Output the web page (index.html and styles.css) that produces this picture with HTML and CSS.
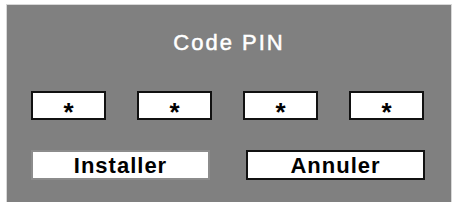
FILE: index.html
```
<!DOCTYPE html>
<html lang="fr">
<head>
    <meta charset="UTF-8">
    <meta name="viewport" content="width=device-width, initial-scale=1.0">
    <title>Code PIN</title>
    <link rel="stylesheet" href="styles.css">
</head>
<body>
    <div class="pin-dialog">
        <h1 class="title">Code PIN</h1>

        <div class="pin-row">
            <div class="pin-box">*</div>
            <div class="pin-box">*</div>
            <div class="pin-box">*</div>
            <div class="pin-box">*</div>
        </div>

        <div class="button-row">
            <div class="btn selected">Installer</div>
            <div class="btn">Annuler</div>
        </div>
    </div>
</body>
</html>
```

FILE: styles.css
```
body {
    margin: 0;
    background-color: #fff;
    font-family: "Liberation Sans", Arial, sans-serif;
}
.pin-dialog {
    box-sizing: border-box;
    width: 444px;
    height: 197px;
    margin: 5px 0 0 7px;
    padding: 25px 0 0 24px;
    background-color: #808080;
    outline: 1px solid #d8d8d8;
}
.title {
    margin: 0 0 0 -24px;
    font-size: 22px;
    line-height: 26px;
    font-weight: normal;
    letter-spacing: 2px;
    color: #fff;
    text-align: center;
    -webkit-text-stroke: 0.5px #fff;
}
.pin-row {
    display: flex;
    gap: 31px;
    margin-top: 35px;
}
.pin-box {
    box-sizing: border-box;
    width: 75px;
    height: 29px;
    background-color: #fff;
    border: 2px solid #111;
    text-align: center;
    font-size: 26px;
    font-weight: bold;
    line-height: 38px;
    color: #000;
}
.button-row {
    display: flex;
    gap: 36px;
    margin-top: 30px;
}
.btn {
    box-sizing: border-box;
    width: 179px;
    height: 30px;
    background-color: #fff;
    border: 2px solid #111;
    text-align: center;
    font-size: 22px;
    font-weight: bold;
    line-height: 27px;
    letter-spacing: 1px;
    color: #000;
}
.btn.selected {
    border-color: #8c8c8c;
}
```
